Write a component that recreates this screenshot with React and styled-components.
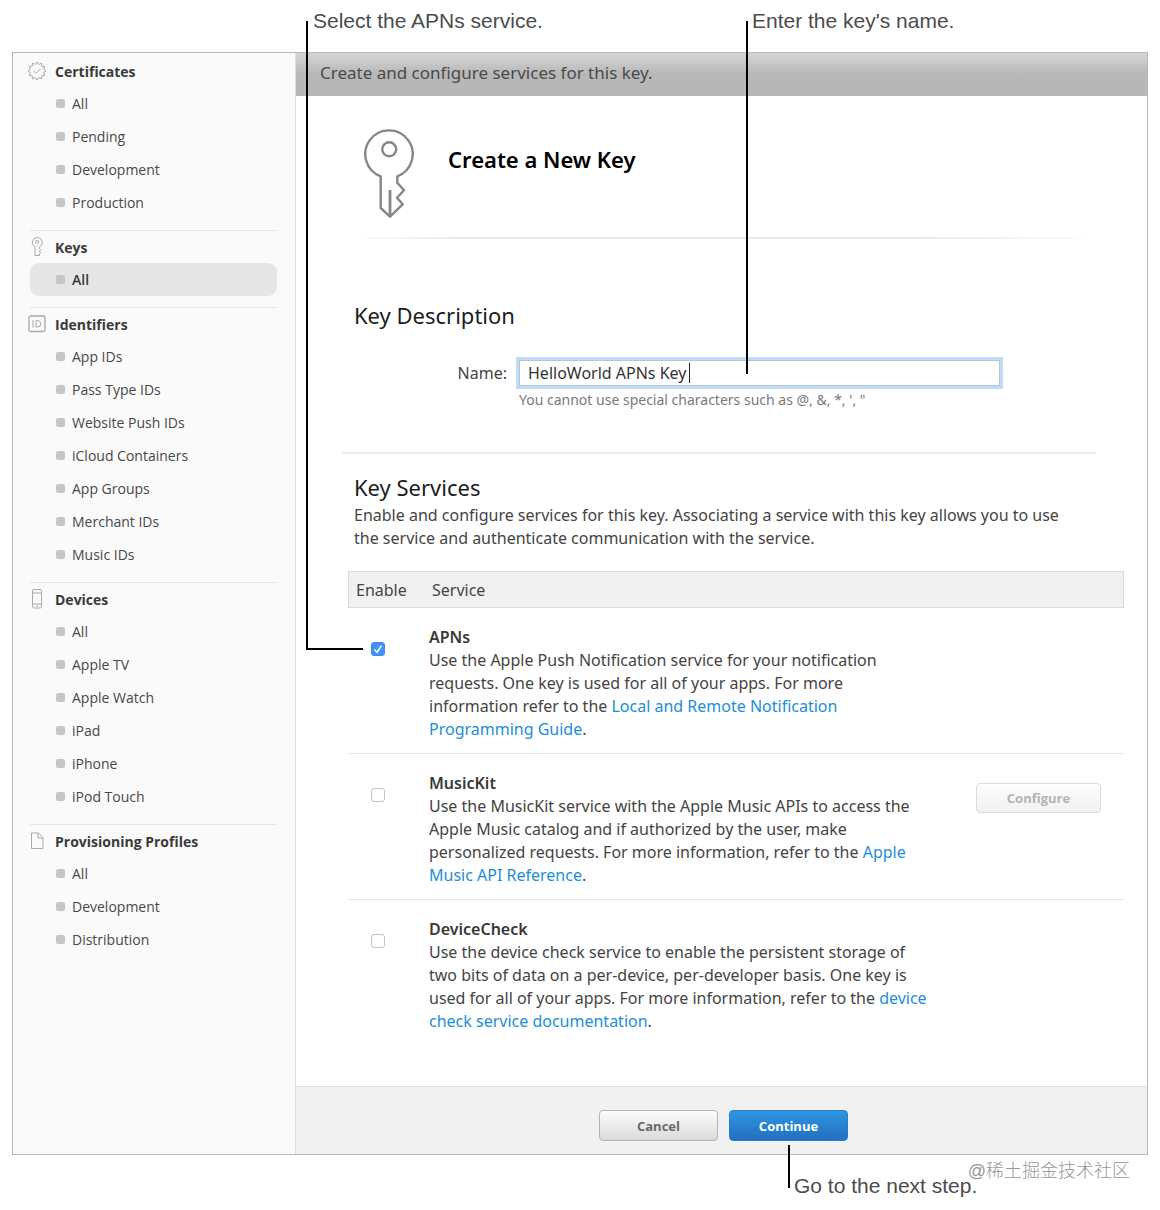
import { useState } from 'react';
import styled, { createGlobalStyle, css } from 'styled-components';

const GlobalStyle = createGlobalStyle`
  * {
    box-sizing: border-box;
  }

  body {
    margin: 0;
    background: #fff;
    color: #444;
    font-family: 'Noto Sans', 'Open Sans', sans-serif;
    font-size: 16px;
  }
`;

const Figure = styled.div`
  position: relative;
  padding: 52px 12px 56px;
`;

const Frame = styled.div`
  display: flex;
  border: 1px solid #b9b9b9;
`;

/* sidebar */

const Sidebar = styled.nav`
  flex: 0 0 283px;
  padding: 2px 18px 0 15px;
  background: #fafafa;
  border-right: 1px solid #e0e0e0;
  font-family: 'Open Sans', 'Noto Sans', sans-serif;
`;

const Section = styled.section`
  padding-bottom: 11px;
`;

const SectionTitle = styled.h3`
  display: flex;
  align-items: center;
  gap: 9px;
  height: 32px;
  margin: 0;
  font-size: 14px;
  font-weight: 700;
  color: #3a3a3a;

  svg {
    flex: none;
    color: #a9a9a9;
  }
`;

const SectionRule = styled.hr`
  height: 1px;
  margin: 0 0 0 2px;
  border: 0;
  background: #e6e6e6;
`;

const ItemList = styled.ul`
  margin: 0;
  padding: 0 0 0 2px;
  list-style: none;
`;

const ItemLink = styled.a`
  display: flex;
  align-items: center;
  gap: 7px;
  height: 33px;
  padding-left: 26px;
  border-radius: 9px;
  color: #484848;
  font-size: 14px;
  text-decoration: none;

  &::before {
    content: '';
    width: 9px;
    height: 9px;
    border-radius: 2px;
    background: #c6c6c6;
  }

  ${(props) =>
    props.$active &&
    css`
      background: #e6e6e6;
      color: #3a3a3a;
      font-weight: 600;
    `}
`;

/* main column */

const Main = styled.main`
  flex: 1;
  min-width: 0;
  display: flex;
  flex-direction: column;
`;

const TopBar = styled.div`
  height: 43px;
  padding-left: 24px;
  line-height: 39px;
  font-size: 17px;
  background: linear-gradient(#d6d6d6, #b7b7b7 50%, #b7b7b7);
  color: #4a4a4a;
`;

const Hero = styled.header`
  display: flex;
  align-items: flex-start;
  gap: 34px;
  height: 141px;
  padding: 33px 0 0 68px;
`;

const HeroTitle = styled.h1`
  margin: 0;
  line-height: 60px;
  font-size: 22px;
  font-weight: 600;
  color: #000;
`;

const HeroRule = styled.hr`
  height: 2px;
  margin: 0 42px 1px 54px;
  border: 0;
  background: linear-gradient(90deg, #fff, #e9e9e9 15%, #e9e9e9 75%, #fff);
`;

const Description = styled.section`
  margin: 0 51px 0 46px;
  padding: 59px 0 42px 12px;
  border-bottom: 2px solid #ebebeb;
`;

const Heading = styled.h2`
  margin: 0;
  line-height: 32px;
  font-size: 22px;
  font-weight: 400;
  color: #1c1c1c;
`;

const Field = styled.div`
  display: grid;
  grid-template-columns: 153px minmax(0, 481px);
  column-gap: 12px;
  margin-top: 29px;
`;

const FieldLabel = styled.label`
  line-height: 26px;
  text-align: right;
`;

const InputBox = styled.div`
  position: relative;
`;

const NameInput = styled.input`
  display: block;
  width: 100%;
  height: 26px;
  padding: 0 8px;
  border: 1px solid #b5c6d6;
  border-radius: 0;
  outline: 0;
  box-shadow: 0 0 0 3px #bfdcf7;
  background: #fff;
  color: #333;
  caret-color: transparent;
  font: inherit;
`;

const Caret = styled.span`
  position: absolute;
  left: 170px;
  top: 3px;
  width: 1px;
  height: 20px;
  background: #222;
`;

const Hint = styled.p`
  grid-column: 2;
  margin: 4px 0 0;
  line-height: 20px;
  font-size: 14px;
  color: #7a7a7a;
`;

const Services = styled.section`
  flex: 1;
  padding: 17px 23px 41px 52px;
`;

const IntroBlock = styled.div`
  padding-left: 6px;
`;

const Intro = styled.p`
  max-width: 728px;
  margin: 1px 0 21px;
  line-height: 23px;
`;

const ServiceTable = styled.table`
  width: 100%;
  border-collapse: separate;
  border-spacing: 0;
  text-align: left;
`;

const HeadCell = styled.th`
  width: ${(props) => props.$width || 'auto'};
  height: 37px;
  padding: 0 0 0 ${(props) => (props.$first ? 7 : 3)}px;
  border: solid #d9d9d9;
  border-width: 1px 0;
  background: #f1f1f1;
  font-weight: 400;

  &:first-child {
    border-left-width: 1px;
  }

  &:last-child {
    border-right-width: 1px;
  }
`;

const Row = styled.tr`
  & > td {
    padding: 18px 0 12px;
    border-bottom: 1px solid #e6e6e6;
    vertical-align: top;
  }

  &:last-child > td {
    border-bottom: 0;
  }
`;

const ServiceText = styled.div`
  max-width: 505px;
  line-height: 23px;

  label {
    display: block;
    font-weight: 600;
    color: #383838;
  }

  p {
    margin: 0;
  }
`;

const TextLink = styled.a`
  color: #1b8fd6;
  text-decoration: none;
`;

const CheckWrap = styled.span`
  display: grid;
  width: 14px;
  margin: 16px 0 0 23px;

  & > * {
    grid-area: 1 / 1;
  }

  svg {
    pointer-events: none;
  }
`;

const CheckBox = styled.input`
  appearance: none;
  width: 14px;
  height: 14px;
  margin: 0;
  border: 1px solid #c4c4c4;
  border-radius: 3px;
  background: #fff;

  &:checked {
    border-color: #3a8cf5;
    background: #3f93fa;
  }
`;

const Button = styled.button`
  height: 31px;
  width: 119px;
  border: 1px solid #b4b4b4;
  border-radius: 4px;
  background: linear-gradient(#fdfdfd, #dadada);
  color: #6a6a6a;
  font: 700 13px 'Open Sans', 'Noto Sans', sans-serif;

  ${(props) =>
    props.$primary &&
    css`
      border-color: #2580cc;
      background: linear-gradient(#3095e0, #2170bf);
      color: #fff;
    `}

  &:disabled {
    width: 125px;
    height: 30px;
    border-color: #dcdcdc;
    background: linear-gradient(#fefefe, #f1f1f1);
    color: #b4b4b4;
  }
`;

const ButtonCell = styled.div`
  display: flex;
  justify-content: flex-end;
  padding: 11px 23px 0 0;
`;

const Footer = styled.footer`
  display: flex;
  justify-content: center;
  gap: 11px;
  height: 68px;
  padding: 23px 0 0 4px;
  border-top: 1px solid #e3e3e3;
  background: #f1f1f1;
`;

/* callouts drawn over the window */

const CalloutText = styled.span`
  position: absolute;
  left: ${(props) => props.$left}px;
  top: ${(props) => props.$top}px;
  line-height: 24px;
  font-family: 'Liberation Sans', Arial, sans-serif;
  font-size: 21px;
  color: #4c4c4c;
  white-space: nowrap;
`;

const CalloutLine = styled.span`
  position: absolute;
  left: ${(props) => props.$left}px;
  top: ${(props) => props.$top}px;
  width: ${(props) => props.$width || 2}px;
  height: ${(props) => props.$height || 2}px;
  background: #000;
  pointer-events: none;
`;

const Anchor = styled.div`
  position: relative;
`;

const Watermark = styled.span`
  position: absolute;
  right: 30px;
  bottom: 28px;
  line-height: 24px;
  font-family: 'Liberation Sans', 'Noto Sans CJK SC', sans-serif;
  font-size: 18px;
  font-weight: 300;
  color: #979797;
`;

/* icons */

const sealPoints = Array.from({ length: 24 }, (_, i) => {
  const radius = i % 2 ? 6.8 : 9;
  const angle = (i * Math.PI) / 12;
  return `${10 + radius * Math.sin(angle)},${10 - radius * Math.cos(angle)}`;
}).join(' ');

const SealIcon = () => (
  <svg width="18" height="20" viewBox="1 0 18 20" fill="none" stroke="currentColor" overflow="visible">
    <polygon points={sealPoints} strokeLinejoin="round" />
    <path d="M6.5 9.8l2.5 2.6 4.5-4.5" />
  </svg>
);

const SmallKeyIcon = () => (
  <svg width="18" height="20" viewBox="0 0 18 20" fill="none" stroke="currentColor">
    <path d="M7 10a5 5 0 1 1 4.5 0v1.8l1 1.2-1 1.3 1 1.5-1 1.2v1.5H7z" />
    <circle cx="9.2" cy="4.8" r="1.5" />
  </svg>
);

const IdIcon = () => (
  <svg width="18" height="18" viewBox="0 0 18 18" fill="none" stroke="currentColor">
    <rect x="1" y="1" width="16" height="15.5" rx="1.5" strokeWidth="1.3" />
    <path d="M5 5v7.5M8 5.5v6.5h1.5q3.3 0 3.3-3.2t-3.3-3.3z" />
  </svg>
);

const PhoneIcon = () => (
  <svg width="18" height="20" viewBox="0 0 18 20" fill="none" stroke="currentColor">
    <rect x="4.5" y="0.5" width="9" height="18.5" rx="1.5" />
    <path d="M4.5 4h9M4.5 15h9M8 17.2h2" />
  </svg>
);

const PageIcon = () => (
  <svg width="18" height="18" viewBox="0 0 18 18" fill="none" stroke="currentColor">
    <path d="M3.5 1h7L15 5.5V16.5H3.5zM10 1v5h5" strokeLinejoin="round" />
  </svg>
);

const BigKeyIcon = () => (
  <svg width="50" height="90" viewBox="0 0 50 90" fill="none" stroke="#868686" strokeWidth="2.4">
    <path
      d="M16.7 47.3a23.7 23.7 0 1 1 16.6 0v6.4l6.7 7.6-7 7.4 5.7 6.6L26 87.7 16.7 79z"
      strokeLinejoin="round"
    />
    <circle cx="25.2" cy="20.3" r="7" />
    <path d="M26 61v26" strokeWidth="2.8" />
  </svg>
);

const sections = [
  { title: 'Certificates', icon: SealIcon, items: ['All', 'Pending', 'Development', 'Production'] },
  { title: 'Keys', icon: SmallKeyIcon, items: ['All'], active: 'All' },
  {
    title: 'Identifiers',
    icon: IdIcon,
    items: [
      'App IDs',
      'Pass Type IDs',
      'Website Push IDs',
      'iCloud Containers',
      'App Groups',
      'Merchant IDs',
      'Music IDs',
    ],
  },
  {
    title: 'Devices',
    icon: PhoneIcon,
    items: ['All', 'Apple TV', 'Apple Watch', 'iPad', 'iPhone', 'iPod Touch'],
  },
  { title: 'Provisioning Profiles', icon: PageIcon, items: ['All', 'Development', 'Distribution'] },
];

const services = [
  {
    id: 'apns',
    name: 'APNs',
    text: 'Use the Apple Push Notification service for your notification requests. One key is used for all of your apps. For more information refer to the ',
    link: 'Local and Remote Notification Programming Guide',
  },
  {
    id: 'musickit',
    name: 'MusicKit',
    text: 'Use the MusicKit service with the Apple Music APIs to access the Apple Music catalog and if authorized by the user, make personalized requests. For more information, refer to the ',
    link: 'Apple Music API Reference',
    configurable: true,
  },
  {
    id: 'devicecheck',
    name: 'DeviceCheck',
    text: 'Use the device check service to enable the persistent storage of two bits of data on a per-device, per-developer basis. One key is used for all of your apps. For more information, refer to the ',
    link: 'device check service documentation',
  },
];

function App() {
  const [name, setName] = useState('HelloWorld APNs Key');
  const [enabled, setEnabled] = useState({ apns: true });

  const toggle = (id) => setEnabled((prev) => ({ ...prev, [id]: !prev[id] }));

  return (
    <Figure>
      <GlobalStyle />
      <Frame>
        <Sidebar>
          {sections.map(({ title, icon: Icon, items, active }, index) => (
            <Section key={title}>
              {index > 0 && <SectionRule />}
              <SectionTitle>
                <Icon />
                {title}
              </SectionTitle>
              <ItemList>
                {items.map((item) => (
                  <li key={item}>
                    <ItemLink href="#" $active={item === active}>
                      {item}
                    </ItemLink>
                  </li>
                ))}
              </ItemList>
            </Section>
          ))}
        </Sidebar>

        <Main>
          <TopBar>Create and configure services for this key.</TopBar>
          <Hero>
            <BigKeyIcon />
            <HeroTitle>Create a New Key</HeroTitle>
          </Hero>
          <HeroRule />

          <Description>
            <Heading>Key Description</Heading>
            <Field>
              <FieldLabel htmlFor="key-name">Name:</FieldLabel>
              <InputBox>
                <NameInput id="key-name" value={name} onChange={(e) => setName(e.target.value)} />
                <Caret />
              </InputBox>
              <Hint>You cannot use special characters such as @, &amp;, *, ', "</Hint>
            </Field>
          </Description>

          <Services>
            <IntroBlock>
              <Heading>Key Services</Heading>
              <Intro>
                Enable and configure services for this key. Associating a service with this key
                allows you to use the service and authenticate communication with the service.
              </Intro>
            </IntroBlock>
            <ServiceTable>
              <thead>
                <tr>
                  <HeadCell $first $width="81px">Enable</HeadCell>
                  <HeadCell>Service</HeadCell>
                  <HeadCell as="td" $width="150px" />
                </tr>
              </thead>
              <tbody>
                {services.map((service) => (
                  <Row key={service.id}>
                    <td>
                      <CheckWrap>
                        <CheckBox
                          type="checkbox"
                          id={service.id}
                          checked={!!enabled[service.id]}
                          onChange={() => toggle(service.id)}
                        />
                        {enabled[service.id] && (
                          <svg width="14" height="14" viewBox="0 0 14 14" fill="none" stroke="#fff">
                            <path d="M3.5 7.5l2.5 2.7 4.5-6.5" strokeWidth="1.5" />
                          </svg>
                        )}
                      </CheckWrap>
                    </td>
                    <td>
                      <ServiceText>
                        <label htmlFor={service.id}>{service.name}</label>
                        <p>
                          {service.text}
                          <TextLink href="#">{service.link}</TextLink>.
                        </p>
                      </ServiceText>
                    </td>
                    <td>
                      {service.configurable && (
                        <ButtonCell>
                          <Button disabled>Configure</Button>
                        </ButtonCell>
                      )}
                    </td>
                  </Row>
                ))}
              </tbody>
            </ServiceTable>
          </Services>

          <Footer>
            <Button>Cancel</Button>
            <Anchor>
              <Button $primary>Continue</Button>
              <CalloutLine $left={59} $top={35} $height={43} />
              <CalloutText $left={65} $top={64}>Go to the next step.</CalloutText>
            </Anchor>
          </Footer>
        </Main>
      </Frame>

      <CalloutText $left={313} $top={9}>Select the APNs service.</CalloutText>
      <CalloutLine $left={306} $top={21} $height={629} />
      <CalloutLine $left={306} $top={648} $width={57} />
      <CalloutText $left={752} $top={9}>Enter the key's name.</CalloutText>
      <CalloutLine $left={746} $top={21} $height={353} />
      <Watermark>@稀土掘金技术社区</Watermark>
    </Figure>
  );
}

export default App;
